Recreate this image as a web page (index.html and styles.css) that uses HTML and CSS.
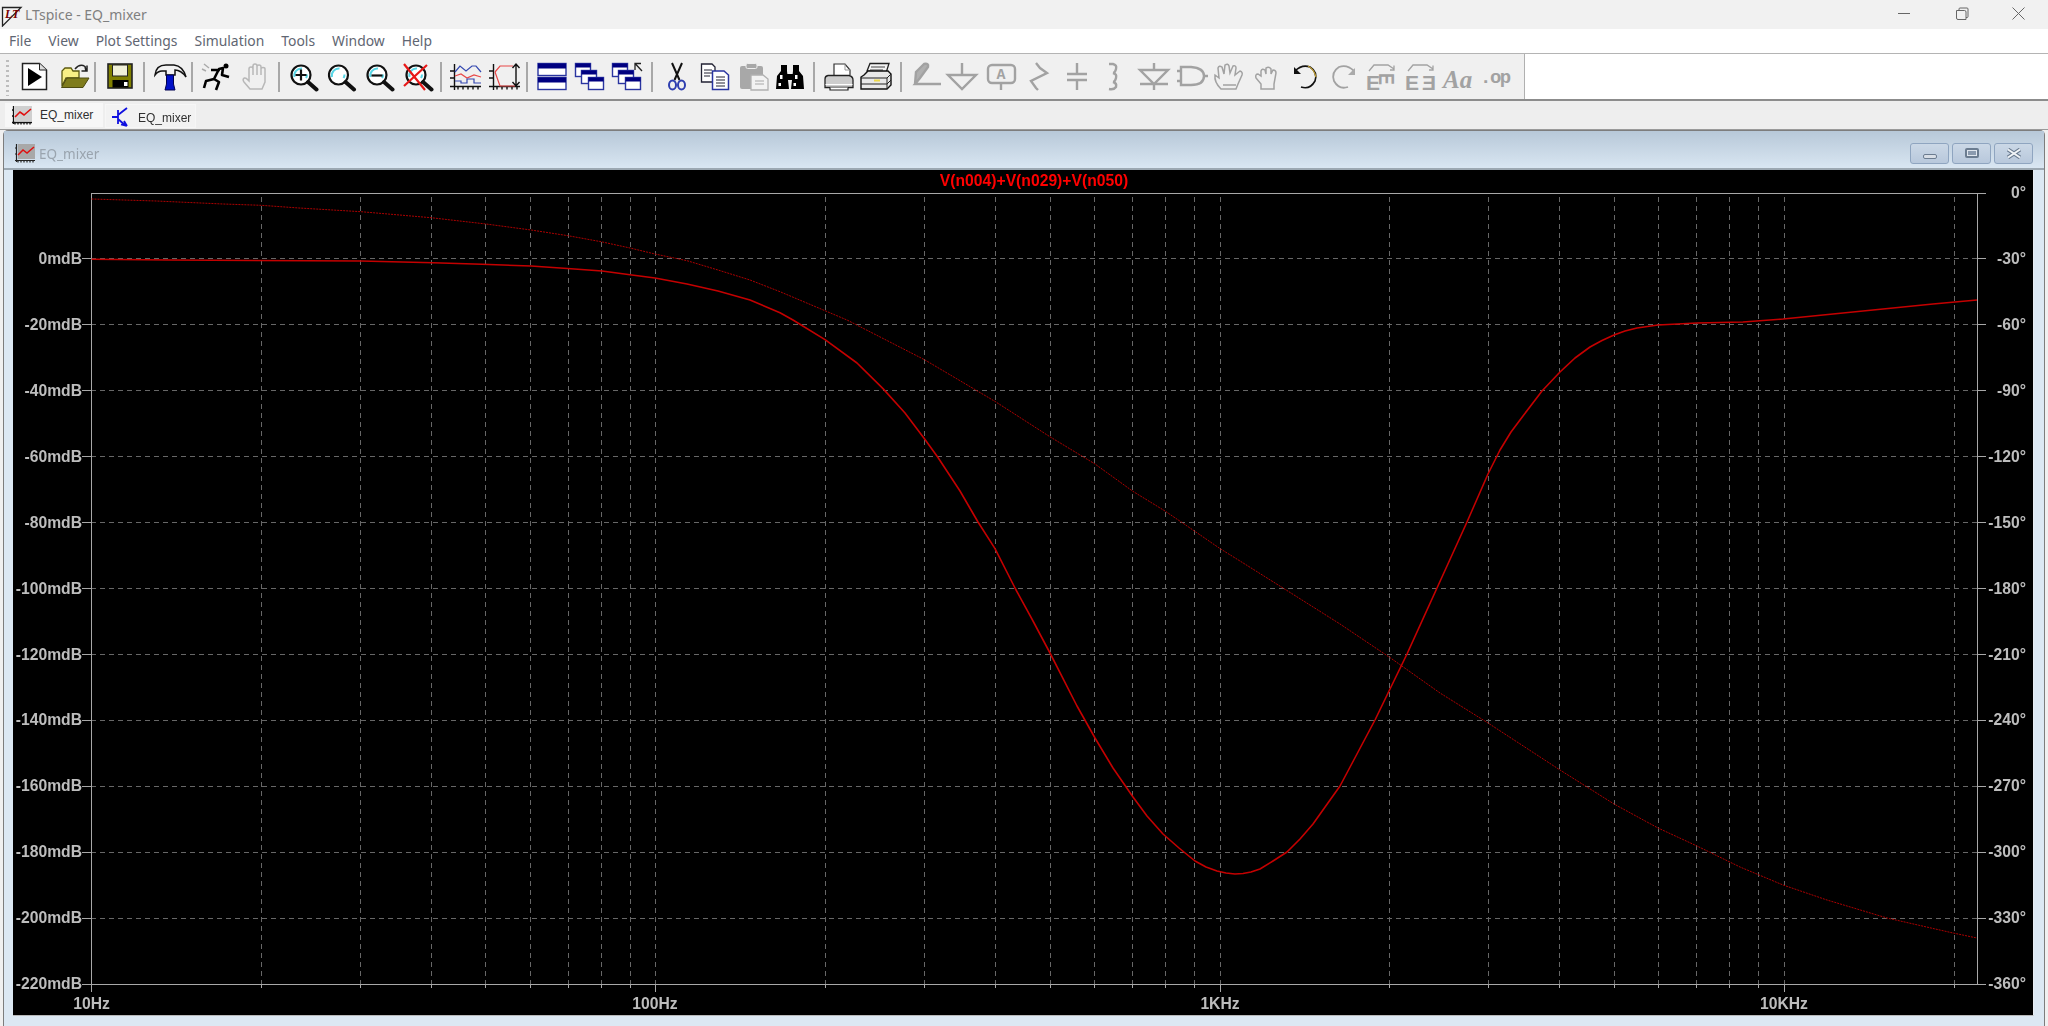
FILE: index.html
```html
<!DOCTYPE html>
<html lang="en">
<head>
<meta charset="utf-8">
<title>LTspice - EQ_mixer</title>
<link rel="stylesheet" href="styles.css">
</head>
<body>
<svg class="defs" aria-hidden="true">
  <symbol id="lens" viewBox="0 0 38 30">
    <circle cx="18" cy="13" r="9.5" fill="#fff" stroke="#111" stroke-width="2.2"/>
    <path d="M11.5 15A7 7 0 0 1 19 6.5M24 12.5a6.5 6.5 0 0 1-1 3.5" fill="none" stroke="#58d6e6" stroke-width="2"/>
    <path d="M25 20l8.5 7.5" stroke="#111" stroke-width="4" stroke-linecap="round"/>
  </symbol>
  <symbol id="axes" viewBox="0 0 38 30">
    <path d="M8.5 2v26M4 24.5h31M4 9h4M4 16h4M12 24.5v3M17 24.5v3M22 24.5v3M27 24.5v3M32 24.5v3" fill="none" stroke="#111" stroke-width="1.4"/>
  </symbol>
  <symbol id="win3" viewBox="0 0 38 30">
    <rect x="5.5" y="1.5" width="15" height="13" fill="#fff" stroke="#2a35a0" stroke-width="1.4"/><rect x="5.5" y="1.5" width="15" height="4" fill="#000080"/>
    <rect x="11.5" y="8.5" width="15" height="13" fill="#fff" stroke="#2a35a0" stroke-width="1.4"/><rect x="11.5" y="8.5" width="15" height="4" fill="#000080"/>
    <rect x="18.5" y="15.5" width="15" height="12" fill="#fff" stroke="#2a35a0" stroke-width="1.4"/><rect x="18.5" y="15.5" width="15" height="4" fill="#000080"/>
  </symbol>
</svg>
<div class="app">
  <header class="titlebar">
    <svg class="logo" viewBox="0 0 24 24"><path d="M2.5 4.5H21L2.500 23Z" fill="#f4f4f4" stroke="#222" stroke-width="1.300"/><text x="5" y="15" class="logo-text">LT</text></svg>
    <span class="apptitle">LTspice - EQ_mixer</span>
    <div class="caption">
      <svg class="capbtn" viewBox="0 0 57 29"><path d="M22 13.500h12" stroke="#666" fill="none"/></svg>
      <svg class="capbtn" viewBox="0 0 57 29"><path d="M23.500 10.500h8a1.500 1.500 0 0 1 1.500 1.500v7.500h-8a1.500 1.500 0 0 1-1.500-1.500ZM26 10.500V9a1 1 0 0 1 1-1h7a1 1 0 0 1 1 1v7.500a1 1 0 0 1-1 1h-1" stroke="#666" fill="none"/></svg>
      <svg class="capbtn" viewBox="0 0 57 29"><path d="M22.500 7.500l12 12M34.500 7.500l-12 12" stroke="#666" fill="none"/></svg>
    </div>
  </header>
  <nav class="menubar">
    <span>File</span><span>View</span><span>Plot Settings</span><span>Simulation</span><span>Tools</span><span>Window</span><span>Help</span>
  </nav>
  <div class="toolarea">
    <div class="toolbar">
      <div class="grip"></div>
      <svg class="i" viewBox="0 0 38 30"><path d="M7.500 1.500H24.500L31.500 8V27.500H7.500Z" fill="#fff" stroke="#222" stroke-width="1.500"/><path d="M24.500 1.500V8H31.500" fill="#ddd" stroke="#222"/><path d="M13 6L27 15L13 24Z" fill="#000"/></svg>
      <svg class="i" viewBox="1 0 38 30"><path d="M10 24V9l3-3h6l2 3h6v7H14Z" fill="#f8ef85" stroke="#5c5a10" stroke-width="1.300"/><path d="M9.500 25.500L15 16H37L31 25.500Z" fill="#7f7c1c" stroke="#4d4b10"/><path d="M23 7Q28 1 33 4.500L34 9M35 3.500V9H29.500" fill="none" stroke="#222" stroke-width="1.500"/></svg>
      <div class="sep"></div>
      <svg class="i" viewBox="0 0 38 30"><rect x="7" y="2" width="24" height="24" fill="#808000" stroke="#222" stroke-width="1.600"/><rect x="11.500" y="3" width="15" height="11" fill="#f0f0d8" stroke="#222"/><rect x="11.500" y="18" width="16" height="7.500" fill="#000"/><rect x="23" y="20" width="3.500" height="4" fill="#fff"/></svg>
      <div class="sep"></div>
      <svg class="i" viewBox="-1 0 38 30"><path d="M15 13V9H11Q7 9 4 13Q5 3 15 3H23Q32 4 35 15Q30 8 24 8V13Z" fill="#f2f2f2" stroke="#111" stroke-width="1.500"/><path d="M15.500 13h7v9l1.500 6H14l1.500-6Z" fill="#0010c8" stroke="#000050"/></svg>
      <div class="sep"></div>
      <svg class="i" viewBox="1 0 38 30"><circle cx="29" cy="4" r="2.500" fill="#000"/><path d="M7 26l2-7 8-2 5-10 4-1-1 7 7 2M17 17l5 3-3 8M23 8l-9 0" fill="none" stroke="#000" stroke-width="2.600" stroke-linejoin="round"/><path d="M7 2l5 4M5 7l4 2" stroke="#aaa" stroke-width="1.400"/></svg>
      <svg class="i" viewBox="0 0 38 30"><path d="M14 27L8 20Q6 17 8.500 16Q10 15.500 12 18L13 19V7Q13 5 15 5Q17 5 17 7V13V4Q17 2 19 2Q21 2 21 4V13V4.500Q21 3 23 3Q25 3 25 5V13V7Q25 5.500 27 5.500Q29 5.500 29 7V20L26 27Z" fill="#f0f0f0" stroke="#b8b8b8" stroke-width="1.500"/></svg>
      <div class="sep"></div>
      <svg class="i" viewBox="2 0 38 30"><use href="#lens"/><path d="M12.500 13h11M18 7.500v11" stroke="#111" stroke-width="2.200"/></svg>
      <svg class="i" viewBox="2.500 0 38 30"><use href="#lens"/></svg>
      <svg class="i" viewBox="2 0 38 30"><use href="#lens"/><path d="M12.500 13.500h11" stroke="#111" stroke-width="2.200"/></svg>
      <svg class="i" viewBox="1 0 38 30"><use href="#lens"/><path d="M6 2L27 28M29 3L6 24" stroke="#e81818" stroke-width="2.200"/></svg>
      <div class="sep"></div>
      <svg class="i" viewBox="1 0 38 30"><use href="#axes"/><path d="M9 10L14 4L20 9L26 4L30 4L35 10" fill="none" stroke="#3448b0" stroke-width="1.200"/><path d="M9 14L15 12L21 16L28 13L35 15" fill="none" stroke="#e84848" stroke-width="1.200"/><path d="M9 19H15V21H21V17H28V21H35" fill="none" stroke="#3448b0" stroke-width="1.200"/></svg>
      <svg class="i" viewBox="0 0 38 30"><use href="#axes"/><path d="M10 10L15 4H28M10 10L15 24H30" fill="none" stroke="#e84848" stroke-width="1.200"/><path d="M31 2V24M27.500 6L31 2L34.500 6M27.500 20L31 24L34.500 20" fill="none" stroke="#111" stroke-width="1.400"/></svg>
      <div class="sep"></div>
      <svg class="i" viewBox="0 0 38 30"><rect x="5" y="1.500" width="28" height="12" fill="#fff" stroke="#2a35a0" stroke-width="1.400"/><rect x="5" y="1.500" width="28" height="5" fill="#000080"/><rect x="5" y="15.500" width="28" height="12" fill="#fff" stroke="#2a35a0" stroke-width="1.400"/><rect x="5" y="15.500" width="28" height="5" fill="#000080"/></svg>
      <svg class="i" viewBox="1 0 38 30"><use href="#win3"/></svg>
      <svg class="i" viewBox="1 0 38 30"><use href="#win3" x="-1"/><path d="M27 8V1.500H33M27.500 2L34 9" fill="none" stroke="#222" stroke-width="1.300"/></svg>
      <div class="sep"></div>
      <svg class="i" viewBox="0 0 38 30"><path d="M14 1L21.500 18M24 1L16.500 18" stroke="#111" stroke-width="2"/><ellipse cx="14.500" cy="23" rx="3.500" ry="4.500" fill="none" stroke="#2f3fb0" stroke-width="2"/><ellipse cx="23.500" cy="23" rx="3.500" ry="4.500" fill="none" stroke="#2f3fb0" stroke-width="2"/></svg>
      <svg class="i" viewBox="0 0 38 30"><path d="M5.500 2H16L19 5V20H5.500Z" fill="#fff" stroke="#223" stroke-width="1.300"/><path d="M8 8h8M8 11h8M8 14h6" stroke="#223"/><path d="M16.500 9H28L32.500 13V27.500H16.500Z" fill="#fff" stroke="#2a35a0" stroke-width="1.500"/><path d="M20 15h9M20 18h9M20 21h9M20 24h9" stroke="#223"/></svg>
      <svg class="i" viewBox="-1 0 38 30"><rect x="5" y="4" width="23" height="23" rx="2" fill="#a8a8a8"/><rect x="11" y="1.500" width="11" height="5" rx="1.500" fill="#a8a8a8" stroke="#eee"/><path d="M16 13H28L33 17V28H16Z" fill="#f2f2f2" stroke="#b0b0b0" stroke-width="1.300"/><path d="M20 19h9M20 22h9" stroke="#a8a8a8"/></svg>
      <svg class="i" viewBox="1 0 38 30"><path d="M5 27L6 14L10 9V3H16V9L18 27ZM33 27L32 14L28 9V3H22V9L20 27Z" fill="#000"/><rect x="16" y="12" width="6" height="6" fill="#000"/><rect x="9" y="13" width="2.500" height="4" fill="#fff"/><rect x="24" y="13" width="2.500" height="4" fill="#fff"/><rect x="7.500" y="21" width="2.500" height="3" fill="#fff"/><rect x="22.500" y="21" width="2.500" height="3" fill="#fff"/></svg>
      <div class="sep"></div>
      <svg class="i" viewBox="0 0 38 30"><path d="M14 13V2H25L30 8V13" fill="#fff" stroke="#333" stroke-width="1.200"/><path d="M25 2V8H30" fill="none" stroke="#999"/><path d="M8 13.500H29Q33 14.500 33 18V25.500H5V17Q5 14 8 13.500Z" fill="#cdcdcd" stroke="#222" stroke-width="1.300"/><path d="M5.500 22.500H32.500" stroke="#fff"/><path d="M10 25.500V28H28V25.500" fill="#fff" stroke="#222" stroke-width="1.200"/></svg>
      <svg class="i" viewBox="3 0 38 30"><path d="M12 9L15 1.500H34L31 11Z" fill="#f4f4f4" stroke="#222" stroke-width="1.300"/><path d="M16 5h14M15 8h13" stroke="#444"/><path d="M9 13L13 9H33L36 12V23L32 27H6V15Z" fill="#e8e8e8" stroke="#111" stroke-width="1.400"/><path d="M6 16H32L36 12M6 22H32L36 18M32 16V27" fill="none" stroke="#222"/><rect x="19" y="17.500" width="6" height="2" fill="#ecd84a"/></svg>
      <div class="sep"></div>
      <svg class="i dis" viewBox="3 0 38 30"><path d="M11 22L12 10L20 2Q25 1 24 5L16 16L11 22H37" fill="#b0b0b0"/></svg>
      <svg class="i dis" viewBox="2 0 38 30"><path d="M19 1V12M5 13H33L19 27Z"/></svg>
      <svg class="i dis" viewBox="1 0 38 30"><rect x="6" y="3" width="27" height="18" rx="4"/><path d="M19 21V28"/><text x="19" y="17" class="ico-label">A</text></svg>
      <svg class="i dis" viewBox="0 0 38 30"><path d="M15 1L19 6L26 11L10 19L15 26L17 28"/></svg>
      <svg class="i dis" viewBox="1 0 38 30"><path d="M19 1V12M9 12H29M9 18H29M19 18V28"/></svg>
      <svg class="i dis" viewBox="2 0 38 30"><path d="M14 2H18Q22 3 21 7Q20 11 18 11Q22 12 21 16Q20 20 18 20Q22 21 21 25Q19 28 14 27"/></svg>
      <svg class="i dis" viewBox="0 0 38 30"><path d="M19 1V8M5 8H33L19 22ZM5 22H33M19 22V28"/></svg>
      <svg class="i dis" viewBox="1 0 38 30"><path d="M9 5H19Q32 6 32 14Q32 23 19 23H9ZM5 9H9M5 19H9M32 14H36"/></svg>
      <svg class="i dis" viewBox="1 0 38 30"><path d="M11 27Q4 20 5 13L9 16L8 6Q9 3 12 5L14 12L15 3Q18 1 19 4L20 11L23 4Q26 3 26 6L25 13L30 9Q33 10 32 13L28 22L26 27Z" stroke-width="1.500"/><path d="M13 23H26" stroke-width="1.500"/></svg>
      <svg class="i dis" viewBox="1 0 38 30"><path d="M13 27V22L8 16Q7 12 10 12L13 14V9Q14 6 17 8L18 12V6Q21 4 23 7V12L25 8Q28 8 28 11L26 22V27Z" stroke-width="1.500"/></svg>
      <svg class="i dark" viewBox="0 0 38 30"><path d="M8 9Q15 2 23 5Q31 10 28 19Q23 28 14 25" stroke-width="1.600"/><path d="M7 5V12H14" fill="#111" stroke="none"/><path d="M21 4Q27 7 29 15" stroke="#c4a032" stroke-width="1.300"/></svg>
      <svg class="i dis" viewBox="0 0 38 30"><path d="M29 9Q22 2 14 5Q6 10 9 19Q14 28 23 25" stroke-width="1.800"/><path d="M30 6V13H23" fill="#aaa" stroke="none"/></svg>
      <svg class="i tall dis" viewBox="1 0 38 36"><path d="M7 9L12 3H26L32 7M32 3.500V8H28" stroke-width="1.300"/><text x="4" y="28" class="ico-e">E</text><text class="ico-e" transform="translate(17,11) rotate(90) scale(.85,1.070)">E</text></svg>
      <svg class="i tall dis" viewBox="0 0 38 36"><path d="M7 9L12 3H26L32 7M32 3.500V8H28" stroke-width="1.300"/><text x="4" y="28" class="ico-e">E</text><text class="ico-e" transform="translate(35,28) scale(-1,1)">E</text></svg>
      <svg class="i" viewBox="0 0 38 30"><text x="4" y="26" class="ico-aa">Aa</text></svg>
      <svg class="i" viewBox="2 0 38 30"><text x="5" y="21" class="ico-op">.op</text></svg>
    </div>
    <div class="toolrest"></div>
  </div>
  <div class="tabs">
    <div class="tab tab-on">
      <svg class="tabicon" viewBox="0 0 20 20"><rect x="3" y="1" width="17" height="15" fill="#cfcfcf"/><path d="M1.500 1V19M0 17.500H20M3 17.500v2M6 17.500v2M9 17.500v2M12 17.500v2M15 17.500v2M18 17.500v2M0 5h2M0 11h2" stroke="#111" stroke-width="1.300" fill="none"/><path d="M3 12L8 7L12 10L19 4" stroke="#e01010" stroke-width="1.600" fill="none"/></svg>
      <span>EQ_mixer</span>
    </div>
    <div class="tab tab-off">
      <svg class="trans" viewBox="0 0 16 20"><path d="M0 10H6M6 3V17M6 8L15 1M6 12L14 19M15 19L9 17.500M15 19L12 14" stroke="#1010e0" stroke-width="1.800" fill="none"/></svg>
      <span>EQ_mixer</span>
    </div>
  </div>
  <main class="mdi">
    <section class="window">
      <div class="winhead">
        <svg class="tabicon wicon" viewBox="0 0 20 20"><rect x="3" y="1" width="17" height="15" fill="#a8a8a8"/><path d="M1.500 1V19M0 17.500H20M3 17.500v2M6 17.500v2M9 17.500v2M12 17.500v2M15 17.500v2M18 17.500v2M0 5h2M0 11h2" stroke="#222" stroke-width="1.200" fill="none"/><path d="M3 12L8 7L12 10L19 4" stroke="#e01010" stroke-width="1.500" fill="none"/></svg>
        <span class="wintitle">EQ_mixer</span>
        <div class="winbtns">
          <div class="wbtn"><div class="w-min"></div></div>
          <div class="wbtn"><div class="w-max"></div></div>
          <div class="wbtn"><svg class="w-x" viewBox="0 0 16 11"><path d="M2 1.500L14 9.500M14 1.500L2 9.500" stroke="#6b7c90" stroke-width="4"/><path d="M2 1.500L14 9.500M14 1.500L2 9.500" stroke="#f2f5f8" stroke-width="2"/></svg></div>
        </div>
      </div>
      <div class="pane">
        <svg class="plot" viewBox="13 170 2020 845">
          <path class="gridline" d="M91 258.500H1977M91 324.500H1977M91 390.500H1977M91 456.500H1977M91 522.500H1977M91 588.500H1977M91 654.500H1977M91 720.500H1977M91 786.500H1977M91 852.500H1977M91 918.500H1977"/>
          <path class="gridline" d="M261.500 197V984M360.500 197V984M431.500 197V984M485.500 197V984M530.500 197V984M568.500 197V984M601.500 197V984M630.500 197V984M655.500 197V984M825.500 197V984M924.500 197V984M995.500 197V984M1050.500 197V984M1094.500 197V984M1132.500 197V984M1165.500 197V984M1194.500 197V984M1220.500 197V984M1389.500 197V984M1488.500 197V984M1559.500 197V984M1614.500 197V984M1658.500 197V984M1696.500 197V984M1729.500 197V984M1758.500 197V984M1784.500 197V984M1954.500 197V984"/>
          <path class="axis" d="M91.500 193V992M1977.500 193V984M91 193.500H1986M82 984.500H1986"/>
          <path class="axis" d="M82 258.500H91M82 324.500H91M82 390.500H91M82 456.500H91M82 522.500H91M82 588.500H91M82 654.500H91M82 720.500H91M82 786.500H91M82 852.500H91M82 918.500H91M1977 258.500H1986M1977 324.500H1986M1977 390.500H1986M1977 456.500H1986M1977 522.500H1986M1977 588.500H1986M1977 654.500H1986M1977 720.500H1986M1977 786.500H1986M1977 852.500H1986M1977 918.500H1986"/>
          <path class="axis" d="M261.500 984V988M360.500 984V988M431.500 984V988M485.500 984V988M530.500 984V988M568.500 984V988M601.500 984V988M630.500 984V988M825.500 984V988M924.500 984V988M995.500 984V988M1050.500 984V988M1094.500 984V988M1132.500 984V988M1165.500 984V988M1194.500 984V988M1389.500 984V988M1488.500 984V988M1559.500 984V988M1614.500 984V988M1658.500 984V988M1696.500 984V988M1729.500 984V988M1758.500 984V988M1954.500 984V988M655.500 984V992M1220.500 984V992M1784.500 984V992"/>
          <polyline class="phase" points="91.500,199 156,201 223,204 261,205.300 299,208 361,211.700 431,217.700 486,224 531,230 568,235.700 601,241.700 630,248 655,254 687,260.700 718,270 750,280 780,291.700 847,320 925,360 995,401.400 1050,436.800 1095,464 1133,491.400 1165,511 1194,530.700 1220,548.600 1240,561 1283,588 1340,624 1390,657.600 1440,693 1488,723 1560,770 1614,804 1658,828 1697,846 1740,867 1783,885 1827,900 1887,918 1953,933 1977,938"/>
          <polyline class="mag" points="91.500,259.300 169,260 361,261 433,262.700 482,264.300 531,266 571,268.700 602,271 630,274.700 655,278 687,284 718,291 750,300 780,312.700 793,320 825,339.600 857,363 883,388.600 905,413 925,439.600 938,457.500 960,491 978,522 995,548.600 1015,588 1033,621 1050,653 1077,706 1095,738 1113,768 1133,797 1147,816 1163,834 1179,848 1195,861 1206,867 1217,871 1226,873 1235,874 1243,873.500 1251,872 1260,869 1273,861 1287,852 1300,839 1313,824 1340,786 1375,720 1390,689 1407,654 1437,588 1467,522 1488,474 1500,450 1511,432 1523,416 1542,391 1560,372 1575,358 1590,347 1602,340.500 1614,335 1625,331 1637,328 1658,325 1697,323 1743,322 1783,319 1833,314 1883,309 1933,304 1977,300"/>
          <text class="ttl" x="1034" y="186">V(n004)+V(n029)+V(n050)</text>
          <text class="yl" x="82" y="264">0mdB</text>
          <text class="yl" x="82" y="330">-20mdB</text>
          <text class="yl" x="82" y="396">-40mdB</text>
          <text class="yl" x="82" y="462">-60mdB</text>
          <text class="yl" x="82" y="528">-80mdB</text>
          <text class="yl" x="82" y="594">-100mdB</text>
          <text class="yl" x="82" y="660">-120mdB</text>
          <text class="yl" x="82" y="725">-140mdB</text>
          <text class="yl" x="82" y="791">-160mdB</text>
          <text class="yl" x="82" y="857">-180mdB</text>
          <text class="yl" x="82" y="923">-200mdB</text>
          <text class="yl" x="82" y="989">-220mdB</text>
          <text class="yr" x="2026" y="198">0°</text>
          <text class="yr" x="2026" y="264">-30°</text>
          <text class="yr" x="2026" y="330">-60°</text>
          <text class="yr" x="2026" y="396">-90°</text>
          <text class="yr" x="2026" y="462">-120°</text>
          <text class="yr" x="2026" y="528">-150°</text>
          <text class="yr" x="2026" y="594">-180°</text>
          <text class="yr" x="2026" y="660">-210°</text>
          <text class="yr" x="2026" y="725">-240°</text>
          <text class="yr" x="2026" y="791">-270°</text>
          <text class="yr" x="2026" y="857">-300°</text>
          <text class="yr" x="2026" y="923">-330°</text>
          <text class="yr" x="2026" y="989">-360°</text>
          <text class="xl" x="91.500" y="1009">10Hz</text>
          <text class="xl" x="655" y="1009">100Hz</text>
          <text class="xl" x="1220" y="1009">1KHz</text>
          <text class="xl" x="1784" y="1009">10KHz</text>
        </svg>
      </div>
    </section>
  </main>
</div>
</body>
</html>
```
FILE: styles.css
```css
* { box-sizing: border-box; }
html, body { margin: 0; padding: 0; height: 100%; overflow: hidden; background: #f0f0f0; }
.defs { display: block; width: 0; height: 0; }
.app {
  display: flex; flex-direction: column; height: 1026px; width: 2048px;
  font-family: "Noto Sans", "Liberation Sans", sans-serif;
  filter: blur(0.4px);
}
.titlebar { display: flex; align-items: center; height: 29px; background: #f1f1f1; flex: none; }
.logo { width: 24px; height: 24px; margin-right: 1px; flex: none; }
.logo-text { font: italic bold 12px "Liberation Serif", serif; fill: #7a0000; }
.apptitle { font-size: 14px; color: #808080; }
.caption { display: flex; margin-left: auto; padding-right: 1.500px; }
.capbtn { width: 57px; height: 29px; display: block; }

.menubar {
  display: flex; align-items: center; gap: 17px; height: 25px; flex: none;
  padding: 0 0 1px 9px; background: #fff; border-bottom: 1px solid #b4b4b4;
  font-size: 13.900px; color: #5f6672;
}

.toolarea { display: flex; height: 47px; flex: none; border-bottom: 2px solid #8c8c8c; background: #fff; }
.toolbar { display: flex; align-items: flex-start; width: 1525px; flex: none; padding: 8px 0 0 6px; background: #f0f0f0; border-right: 1px solid #b0b0b0; }
.toolrest { flex: 1; }
.grip { width: 3px; height: 36px; margin: -2px 6px 0 0; flex: none; background: repeating-linear-gradient(#bdbdbd 0 2px, transparent 2px 5px); }
.i { width: 38px; height: 30px; flex: none; display: block; }
.tall { height: 36px; }
.sep { width: 2px; height: 30px; margin: 0 5px 0 3.400px; background: #a8a8a8; flex: none; }
.dis { fill: none; stroke: #a2a2a2; stroke-width: 2.400; }
.dark { fill: none; stroke: #111; }
.ico-label { font: bold 15px "Liberation Mono", monospace; fill: #a2a2a2; stroke: none; text-anchor: middle; }
.ico-e { font: bold 21px "Liberation Sans", sans-serif; fill: #a2a2a2; stroke: none; }
.ico-aa { font: italic bold 25px "Liberation Serif", serif; fill: #a2a2a2; }
.ico-op { font: bold 19px "Liberation Mono", monospace; fill: #a2a2a2; letter-spacing: -1.500px; }

.tabs { display: flex; align-items: flex-start; gap: 2px; height: 29px; flex: none; padding: 2px 0 0 5px; background: #eeeeee; border-bottom: 1px solid #9a9a9a; }
.tab { display: flex; align-items: center; height: 24px; font: 12px "Liberation Sans", sans-serif; color: #303030; }
.tab-on { width: 98px; padding-left: 7px; gap: 8px; background: #f7f7f7; }
.tab-off { width: 91px; margin-top: 1px; padding: 3px 0 0 6px; gap: 10px; background: #f2f2f2; border: 1px solid #f6f6f6; }
.tabicon { width: 20px; height: 20px; flex: none; display: block; }
.trans { width: 16px; height: 20px; flex: none; display: block; margin-top: -2px; }

.mdi { flex: 1; min-height: 0; padding: 0 3px; display: flex; }
.window { flex: 1; background: #dce8f3; border: 1px solid #7d7d7d; border-width: 1px 1px 0 1px; border-radius: 5px 5px 0 0; }
.winhead { display: flex; align-items: flex-start; height: 39px; padding: 12px 11px 0 11px; background: linear-gradient(#b7c8d8, #d9e6f2); border-bottom: 2px solid #9ca8b2; }
.wicon { margin-right: 4px; }
.wintitle { font-size: 13.500px; line-height: 22px; color: #9aa4ae; }
.winbtns { display: flex; gap: 3px; margin-left: auto; }
.wbtn { display: flex; align-items: center; justify-content: center; width: 39px; height: 21px; border: 1px solid #8fa5c0; border-radius: 3px; background: linear-gradient(#cbd8e6, #b8c8dc); }
.w-min { width: 14px; height: 5px; margin-top: 5px; background: #d8dee6; border: 1px solid #6b7c90; border-radius: 2px; }
.w-max { width: 14px; height: 10px; margin-top: -1px; background: #8a9aae; border: 2px solid #6b7c90; border-radius: 2px; box-shadow: inset 0 0 0 1px #dfe6ee; }
.w-x { width: 16px; height: 11px; margin-top: -1px; display: block; }

.pane { margin: 0 0 0 9px; width: 2021px; height: 846px; background: #000; border-right: 1px solid #e8edf2; border-bottom: 1px solid #b8b8b8; }
.plot { display: block; width: 2020px; height: 845px; }
.gridline { fill: none; stroke: #676767; stroke-width: 1; stroke-dasharray: 5 4; }
.axis { fill: none; stroke: #a8a8a8; stroke-width: 1; }
.phase { fill: none; stroke: #ac0000; stroke-width: 1; stroke-dasharray: 2 1; }
.mag { fill: none; stroke: #c40000; stroke-width: 1.600; stroke-linejoin: round; }
.ttl, .yl, .yr, .xl { font: bold 15.700px "Liberation Sans", sans-serif; fill: #bdbdbd; }
.ttl { fill: #ff0000; text-anchor: middle; }
.yl, .yr { text-anchor: end; }
.xl { text-anchor: middle; }
```
